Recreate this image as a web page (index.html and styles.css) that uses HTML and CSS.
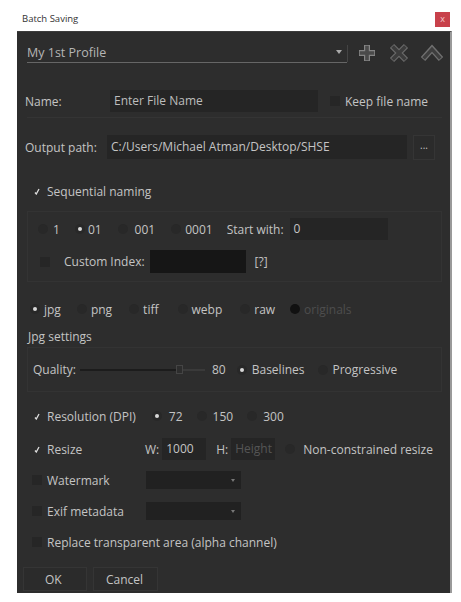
FILE: index.html
```html
<!DOCTYPE html>
<html>
<head>
<meta charset="utf-8">
<link rel="stylesheet" href="styles.css">
</head>
<body>
<div class="titlebar">
  <span class="title">Batch Saving</span>
  <span class="close">x</span>
</div>
<div class="panel">
  <div class="row profile-row">
    <div class="combo">
      <span class="combo-text">My 1st Profile</span>
      <span class="combo-arrow"></span>
    </div>
    <div class="icons">
      <svg class="icon" width="20" height="20" viewBox="0 0 20 20"><path d="M10 2V18M2 10H18" stroke="#858585" stroke-width="6" fill="none"/><path d="M10 2.8V17.2M2.8 10H17.2" stroke="#4a4a4a" stroke-width="3.6" fill="none"/></svg>
      <svg class="icon" width="20" height="20" viewBox="0 0 20 20"><path d="M3 3L17 17M17 3L3 17" stroke="#6a6a6a" stroke-width="6" fill="none"/><path d="M3.6 3.6L16.4 16.4M16.4 3.6L3.6 16.4" stroke="#3c3c3c" stroke-width="3.6" fill="none"/></svg>
      <svg class="icon" width="22" height="20" viewBox="0 0 22 20"><path d="M2 16L11 6L20 16" stroke="#707070" stroke-width="6" fill="none"/><path d="M2.6 15.4L11 6.2L19.4 15.4" stroke="#3e3e3e" stroke-width="3.4" fill="none"/></svg>
    </div>
  </div>

  <div class="row name-row">
    <span class="label lbl-name">Name:</span>
    <div class="input name-input"><span class="ph">Enter File Name</span></div>
    <span class="cb"></span>
    <span class="label">Keep file name</span>
  </div>

  <div class="row output-row">
    <span class="label lbl-out">Output path:</span>
    <div class="input out-input">C:/Users/Michael Atman/Desktop/SHSE</div>
    <div class="btn dots">...</div>
  </div>

  <div class="row seq-row">
    <span class="cb checked"><svg width="6" height="7" viewBox="0 0 6 7"><path d="M1 4.5L2.3 6L5 1" stroke="#ddd" stroke-width="1.3" fill="none"/></svg></span>
    <span class="label">Sequential naming</span>
  </div>

  <div class="group group1">
    <div class="grow g1-r1">
      <span class="rb"></span><span class="label t1">1</span>
      <span class="rb on"></span><span class="label t2">01</span>
      <span class="rb"></span><span class="label t3">001</span>
      <span class="rb"></span><span class="label t4">0001</span>
      <span class="label t5">Start with:</span>
      <div class="input start-input">0</div>
    </div>
    <div class="grow g1-r2">
      <span class="cb"></span>
      <span class="label t6">Custom Index:</span>
      <div class="input custom-input"></div>
      <span class="label t7">[?]</span>
    </div>
  </div>

  <div class="row fmt-row">
    <span class="rb on"></span><span class="label f1">jpg</span>
    <span class="rb"></span><span class="label f2">png</span>
    <span class="rb"></span><span class="label f3">tiff</span>
    <span class="rb"></span><span class="label f4">webp</span>
    <span class="rb"></span><span class="label f5">raw</span>
    <span class="rb black"></span><span class="label disabled">originals</span>
  </div>

  <div class="row jpg-row">
    <span class="label">Jpg settings</span>
  </div>

  <div class="group group2">
    <div class="grow">
      <span class="label q1">Quality:</span>
      <div class="slider"><span class="handle"></span></div>
      <span class="label q2">80</span>
      <span class="rb on"></span><span class="label q3">Baselines</span>
      <span class="rb"></span><span class="label">Progressive</span>
    </div>
  </div>

  <div class="row res-row">
    <span class="cb checked"><svg width="6" height="7" viewBox="0 0 6 7"><path d="M1 4.5L2.3 6L5 1" stroke="#ddd" stroke-width="1.3" fill="none"/></svg></span>
    <span class="label r1">Resolution (DPI)</span>
    <span class="rb on"></span><span class="label r2">72</span>
    <span class="rb"></span><span class="label r3">150</span>
    <span class="rb"></span><span class="label r4">300</span>
  </div>

  <div class="row resize-row">
    <span class="cb checked"><svg width="6" height="7" viewBox="0 0 6 7"><path d="M1 4.5L2.3 6L5 1" stroke="#ddd" stroke-width="1.3" fill="none"/></svg></span>
    <span class="label s1">Resize</span>
    <span class="label s2">W:</span>
    <div class="input small-input">1000</div>
    <span class="label s3">H:</span>
    <div class="input small-input h-input"><span class="ph2">Height</span></div>
    <span class="rb nc"></span><span class="label">Non-constrained resize</span>
  </div>

  <div class="row opt-row wm-row">
    <span class="cb"></span>
    <span class="label o1">Watermark</span>
    <div class="dropdown"><span class="dd-arrow"></span></div>
  </div>

  <div class="row opt-row exif-row">
    <span class="cb"></span>
    <span class="label o1">Exif metadata</span>
    <div class="dropdown"><span class="dd-arrow"></span></div>
  </div>

  <div class="row opt-row alpha-row">
    <span class="cb"></span>
    <span class="label">Replace transparent area (alpha channel)</span>
  </div>

  <div class="row btn-row">
    <div class="btn wide ok">OK</div>
    <div class="btn wide cancel">Cancel</div>
  </div>
</div>
</body>
</html>
```
FILE: styles.css
```css
* { box-sizing: border-box; }
body {
  margin: 0;
  background: #ffffff;
  font-family: "Open Sans", "Liberation Sans", sans-serif;
  font-size: 12px;
  width: 461px;
  height: 602px;
  overflow: hidden;
}
.titlebar {
  height: 31px;
  display: flex;
  align-items: flex-start;
  justify-content: space-between;
  padding: 12px 11px 0 22px;
}
.title {
  font-size: 9.5px;
  color: #333;
  line-height: 13px;
}
.close {
  width: 15px;
  height: 15px;
  background: #c8414b;
  color: #f4c9cc;
  font-size: 9px;
  line-height: 14px;
  text-align: center;
}
.panel {
  margin-left: 17px;
  width: 435px;
  height: 562px;
  background: #2d2d2d;
  border-right: 2px solid #9a9a9a;
  border-top: 1px solid #3c3c3c;
  display: flex;
  flex-direction: column;
  padding: 0 0 0 8px;
  color: #c4c4c4;
}
.label { color: #c4c4c4; white-space: nowrap; }
.row { display: flex; align-items: center; }
.profile-row { height: 21px; margin-top: 10px; }
.combo {
  width: 320px;
  height: 21px;
  margin-left: 2px;
  border-bottom: 1px solid #666;
  display: flex;
  align-items: center;
  justify-content: space-between;
  position: relative;
}
.combo::after {
  content: "";
  position: absolute;
  right: -1px; top: 3px; bottom: 0;
  border-right: 1px solid #444;
}
.combo-text { font-size: 12.5px; color: #b5b5b5; }
.combo-arrow {
  width: 0; height: 0;
  border-left: 3px solid transparent;
  border-right: 3px solid transparent;
  border-top: 4px solid #aaa;
  margin-right: 5px;
}
.icons { display: flex; align-items: center; margin-left: 10px; gap: 12px; }
.icon { display: block; }

.name-row { height: 22px; margin-top: 27px; }
.lbl-name { width: 85px; }
.input {
  background: #252525;
  height: 22px;
  line-height: 22px;
  padding-left: 4px;
  color: #c4c4c4;
}
.ph { color: #bdbdbd; }
.name-input { width: 208px; margin-right: 12px; }
.cb {
  width: 10px; height: 10px;
  background: #262626;
  display: inline-flex;
  align-items: center;
  justify-content: center;
  margin-right: 5px;
  flex: none;
}
.cb.checked { background: transparent; }
.cb svg { display: block; }
.rb {
  width: 10px; height: 10px;
  border-radius: 50%;
  background: #282828;
  display: inline-flex;
  align-items: center;
  justify-content: center;
  margin-right: 3px;
  flex: none;
}
.rb.on::after {
  content: "";
  width: 4px; height: 4px;
  border-radius: 50%;
  background: #d8d8d8;
}
.rb.black { background: #111; }
.disabled { color: #4e4e4e; }

.output-row {
  height: 24px;
  margin-top: 23px;
  position: relative;
}
.output-row::before {
  content: "";
  position: absolute;
  left: 2px; right: 8px; top: -18px;
  border-top: 1px solid #343434;
}
.lbl-out { width: 82px; }
.out-input { width: 300px; height: 24px; line-height: 24px; margin-right: 6px; }
.btn {
  background: #2b2b2b;
  border: 1px solid #353535;
  color: #c4c4c4;
  display: flex;
  align-items: center;
  justify-content: center;
}
.dots { width: 22px; height: 25px; font-size: 10px; padding-bottom: 4px; }

.seq-row { height: 16px; margin-top: 24px; padding-left: 7px; }

.group {
  margin: 0 8px 0 2px;
  border: 1px solid #333;
}
.group1 { margin-top: 12px; height: 71px; padding: 6px 0 0 10px; }
.grow { display: flex; align-items: center; }
.g1-r1 { height: 22px; }
.g1-r2 { height: 23px; margin-top: 10px; }
.t1 { margin-left: 2px; margin-right: 15px; }
.t2 { margin-right: 16px; }
.t3 { margin-left: 4px; margin-right: 16px; }
.t4 { margin-left: 1px; margin-right: 14px; }
.t5 { margin-right: 6px; }
.start-input { width: 98px; }
.g1-r2 .cb { margin-left: 2px; }
.t6 { margin-left: 9px; margin-right: 5px; }
.custom-input { width: 96px; height: 23px; background: #161616; margin-right: 9px; }

.fmt-row { height: 16px; margin-top: 19px; padding-left: 5px; }
.fmt-row .rb { margin-right: 4px; }
.f1 { margin-right: 16px; }
.f2 { margin-right: 17px; }
.f3 { margin-right: 19px; }
.f4 { margin-right: 18px; }
.f5 { margin-right: 15px; }

.jpg-row { height: 16px; margin-top: 11px; padding-left: 3px; }

.group2 { margin-top: 3px; height: 45px; padding: 0 0 0 5px; display: flex; align-items: center; }
.q1 { width: 47px; }
.slider {
  width: 125px; height: 2px;
  background: linear-gradient(to right, #1c1c1c 0, #1c1c1c 78%, #3a3a3a 78%);
  position: relative;
  margin-right: 7px;
}
.handle {
  position: absolute;
  left: 96px; top: -4px;
  width: 7px; height: 9px;
  border: 1px solid #454545;
  background: #2d2d2d;
}
.q2 { margin-right: 11px; }
.group2 .rb { margin-right: 5px; }
.q3 { margin-right: 13px; }

.res-row { height: 16px; margin-top: 16px; padding-left: 7px; }
.r1 { margin-right: 16px; }
.r2 { margin-left: 4px; margin-right: 14px; }
.r3 { margin-left: 3px; margin-right: 14px; }
.r4 { margin-left: 3px; }

.resize-row { height: 22px; margin-top: 14px; padding-left: 7px; }
.s1 { width: 98px; }
.s2 { margin-right: 3px; }
.s3 { margin: 0 3px 0 6px; }
.small-input { width: 44px; height: 22px; line-height: 22px; margin-right: 4px; }
.h-input { margin-right: 10px; }
.rb.nc { margin-right: 8px; }
.ph2 { color: #555; }

.opt-row { height: 18px; padding-left: 7px; }
.wm-row { margin-top: 11px; }
.exif-row { margin-top: 13px; }
.alpha-row { margin-top: 13px; }
.o1 { width: 99px; }
.dropdown {
  width: 95px; height: 18px;
  background: #212121;
  position: relative;
}
.dd-arrow {
  position: absolute; right: 6px; top: 8px;
  border-left: 2.5px solid transparent;
  border-right: 2.5px solid transparent;
  border-top: 3px solid #777;
}
.btn-row { margin-top: 16px; gap: 6px; margin-left: -2px; }
.wide { width: 64px; height: 24px; font-size: 12px; justify-content: flex-start; }
.ok { padding-left: 21px; }
.cancel { padding-left: 12px; width: 65px; }
```
